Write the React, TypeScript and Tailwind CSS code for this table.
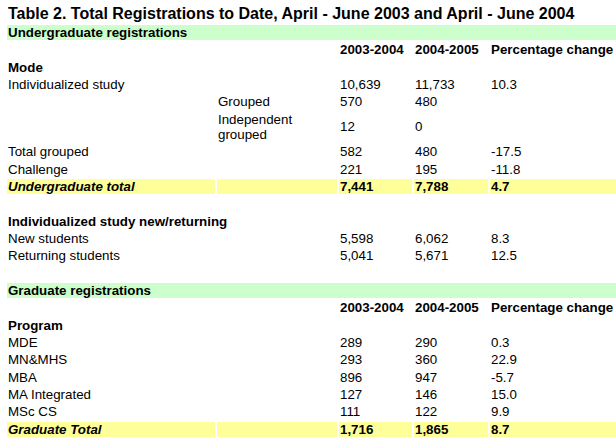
type Row = {
  label?: string;
  sub?: string;
  a?: string;
  b?: string;
  pct?: string;
};

const undergrad: Row[] = [
  { label: "Individualized study", a: "10,639", b: "11,733", pct: "10.3" },
  { sub: "Grouped", a: "570", b: "480" },
  { sub: "Independent grouped", a: "12", b: "0" },
  { label: "Total grouped", a: "582", b: "480", pct: "-17.5" },
  { label: "Challenge", a: "221", b: "195", pct: "-11.8" },
];

const newReturning: Row[] = [
  { label: "New students", a: "5,598", b: "6,062", pct: "8.3" },
  { label: "Returning students", a: "5,041", b: "5,671", pct: "12.5" },
];

const graduate: Row[] = [
  { label: "MDE", a: "289", b: "290", pct: "0.3" },
  { label: "MN&MHS", a: "293", b: "360", pct: "22.9" },
  { label: "MBA", a: "896", b: "947", pct: "-5.7" },
  { label: "MA Integrated", a: "127", b: "146", pct: "15.0" },
  { label: "MSc CS", a: "111", b: "122", pct: "9.9" },
];

const td = "p-0 pl-px align-middle";

function DataRow({ row }: { row: Row }) {
  return (
    <tr>
      <td className={td}>{row.label}</td>
      <td className={td}>{row.sub}</td>
      <td className={td}>{row.a}</td>
      <td className={td}>{row.b}</td>
      <td className={td}>{row.pct}</td>
    </tr>
  );
}

function SectionBar({ title }: { title: string }) {
  return (
    <tr>
      <td colSpan={5} className={`${td} bg-[#ccffcc] font-bold`}>
        {title}
      </td>
    </tr>
  );
}

function YearHeader() {
  return (
    <tr className="font-bold">
      <td className={td}></td>
      <td className={td}></td>
      <td className={td}>2003-2004</td>
      <td className={td}>2004-2005</td>
      <td className={`${td} whitespace-nowrap`}>Percentage change</td>
    </tr>
  );
}

function TotalRow({ label, a, b, pct }: { label: string; a: string; b: string; pct: string }) {
  const cell = `${td} bg-[#ffff99] font-bold`;
  return (
    <tr>
      <td className={`${cell} italic`}>{label}</td>
      <td className={cell}></td>
      <td className={cell}>{a}</td>
      <td className={cell}>{b}</td>
      <td className={cell}>{pct}</td>
    </tr>
  );
}

function Blank() {
  return (
    <tr>
      <td colSpan={5} className={`${td} h-[15.33px]`}></td>
    </tr>
  );
}

export default function App() {
  return (
    <div className="w-[616px] h-[444px] overflow-hidden bg-white text-black font-['Liberation_Sans',Arial,sans-serif]">
      <table className="ml-[5px] mt-[3px] w-[613px] table-fixed border-separate border-spacing-[2px] text-[13.33px] leading-[15.33px]">
        <colgroup>
          <col className="w-[208px]" />
          <col className="w-[120px]" />
          <col className="w-[73px]" />
          <col className="w-[74px]" />
          <col className="w-[126px]" />
        </colgroup>
        <tbody>
          <tr>
            <td colSpan={5} className="p-0 pl-px text-[16px] leading-[18px] font-bold whitespace-nowrap">
              Table 2. Total Registrations to Date, April - June 2003 and April - June 2004
            </td>
          </tr>

          <SectionBar title="Undergraduate registrations" />
          <YearHeader />
          <tr>
            <td className={`${td} font-bold`}>Mode</td>
            <td colSpan={4} className={td}></td>
          </tr>
          {undergrad.map((r, i) => (
            <DataRow key={i} row={r} />
          ))}
          <TotalRow label="Undergraduate total" a="7,441" b="7,788" pct="4.7" />
          <Blank />
          <tr>
            <td colSpan={2} className={`${td} font-bold`}>
              Individualized study new/returning
            </td>
            <td colSpan={3} className={td}></td>
          </tr>
          {newReturning.map((r, i) => (
            <DataRow key={i} row={r} />
          ))}
          <Blank />

          <SectionBar title="Graduate registrations" />
          <YearHeader />
          <tr>
            <td className={`${td} font-bold`}>Program</td>
            <td colSpan={4} className={td}></td>
          </tr>
          {graduate.map((r, i) => (
            <DataRow key={i} row={r} />
          ))}
          <TotalRow label="Graduate Total" a="1,716" b="1,865" pct="8.7" />
        </tbody>
      </table>
    </div>
  );
}
